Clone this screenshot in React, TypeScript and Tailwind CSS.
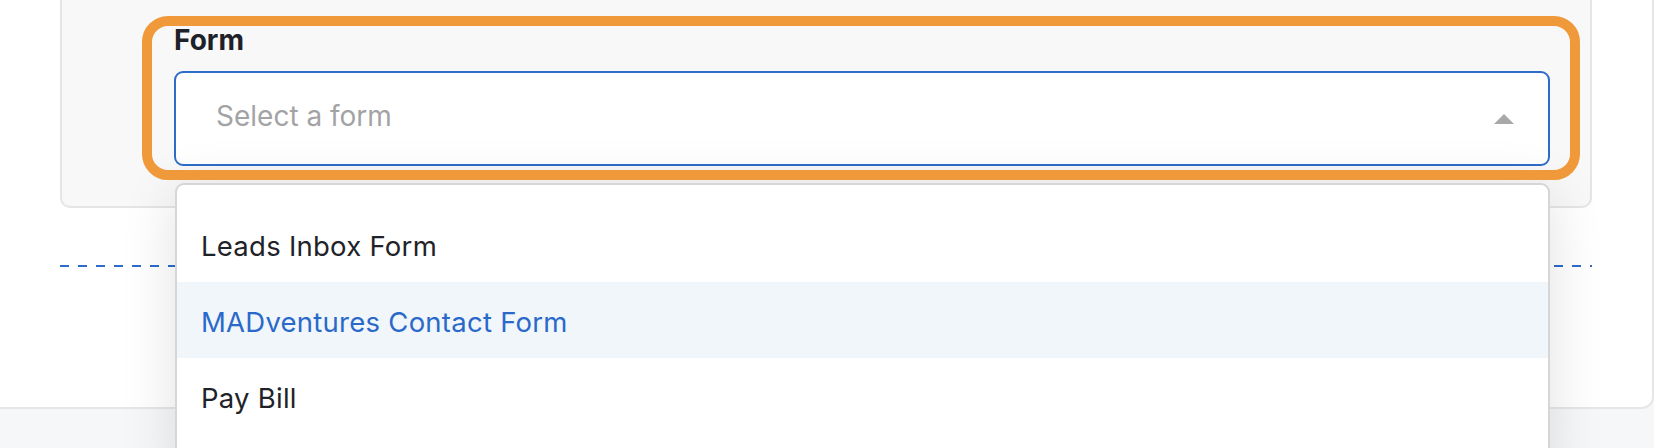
import React from "react";

const forms = [
  { name: "Leads Inbox Form", active: false },
  { name: "MADventures Contact Form", active: true },
  { name: "Pay Bill", active: false },
];

function CaretUp() {
  return (
    <svg width="20" height="10" viewBox="0 0 20 10" className="shrink-0">
      <polygon points="10,0 20,10 0,10" fill="#a8a8ab" />
    </svg>
  );
}

export default function App() {
  return (
    <div className="w-[1654px] h-[448px] overflow-hidden bg-[#f6f7f9] font-['Inter','Noto_Sans',sans-serif]">
      {/* outer card */}
      <div className="w-[1654px] h-[409px] bg-white border-r-2 border-b-2 border-[#e6e6e6] rounded-br-[12px] pl-[60px]">
        {/* settings panel */}
        <div className="w-[1532px] h-[208px] bg-[#f8f8f8] border-x-2 border-b-2 border-[#e5e5e5] rounded-b-[10px] pl-[112px] pt-[23px]">
          <div className="relative w-[1376px]">
            <div className="h-[34px] text-[28px] leading-[34px] font-bold text-[#1d2128]">Form</div>
            <div className="mt-[14px] h-[95px] w-full bg-white border-2 border-[#2d6cc9] rounded-[9px] flex items-center justify-between pl-[40px] pr-[34px]">
              <span className="text-[28px] leading-[34px] text-[#a3a3a5] pb-[5px]">Select a form</span>
              <CaretUp />
            </div>

            {/* open dropdown */}
            <div className="absolute top-[160px] left-[1px] right-0 h-[300px] bg-white border-2 border-[#d6d6d6] rounded-[9px] pt-[21px] shadow-[0_8px_56px_rgba(0,0,0,0.12)]">
              {forms.map((f) => (
                <div
                  key={f.name}
                  className={`h-[76px] flex items-center pl-[24px] pt-[4px] text-[27.5px] leading-[32px] tracking-[0.25px] ${
                    f.active ? "bg-[#f1f6fb] text-[#2a69c9]" : "text-[#1f2329]"
                  }`}
                >
                  {f.name}
                </div>
              ))}
            </div>

            {/* highlight annotation */}
            <div className="pointer-events-none absolute -left-[32px] -top-[7px] -right-[30px] -bottom-[14px] border-[10px] border-[#f0993a] rounded-[26px] z-10" />
          </div>
        </div>

        <div className="mt-[57px] w-[1532px] h-[2px] bg-[linear-gradient(to_right,#2d6cc9_50%,transparent_50%)] bg-[length:18px_2px] bg-repeat-x" />
      </div>
    </div>
  );
}
